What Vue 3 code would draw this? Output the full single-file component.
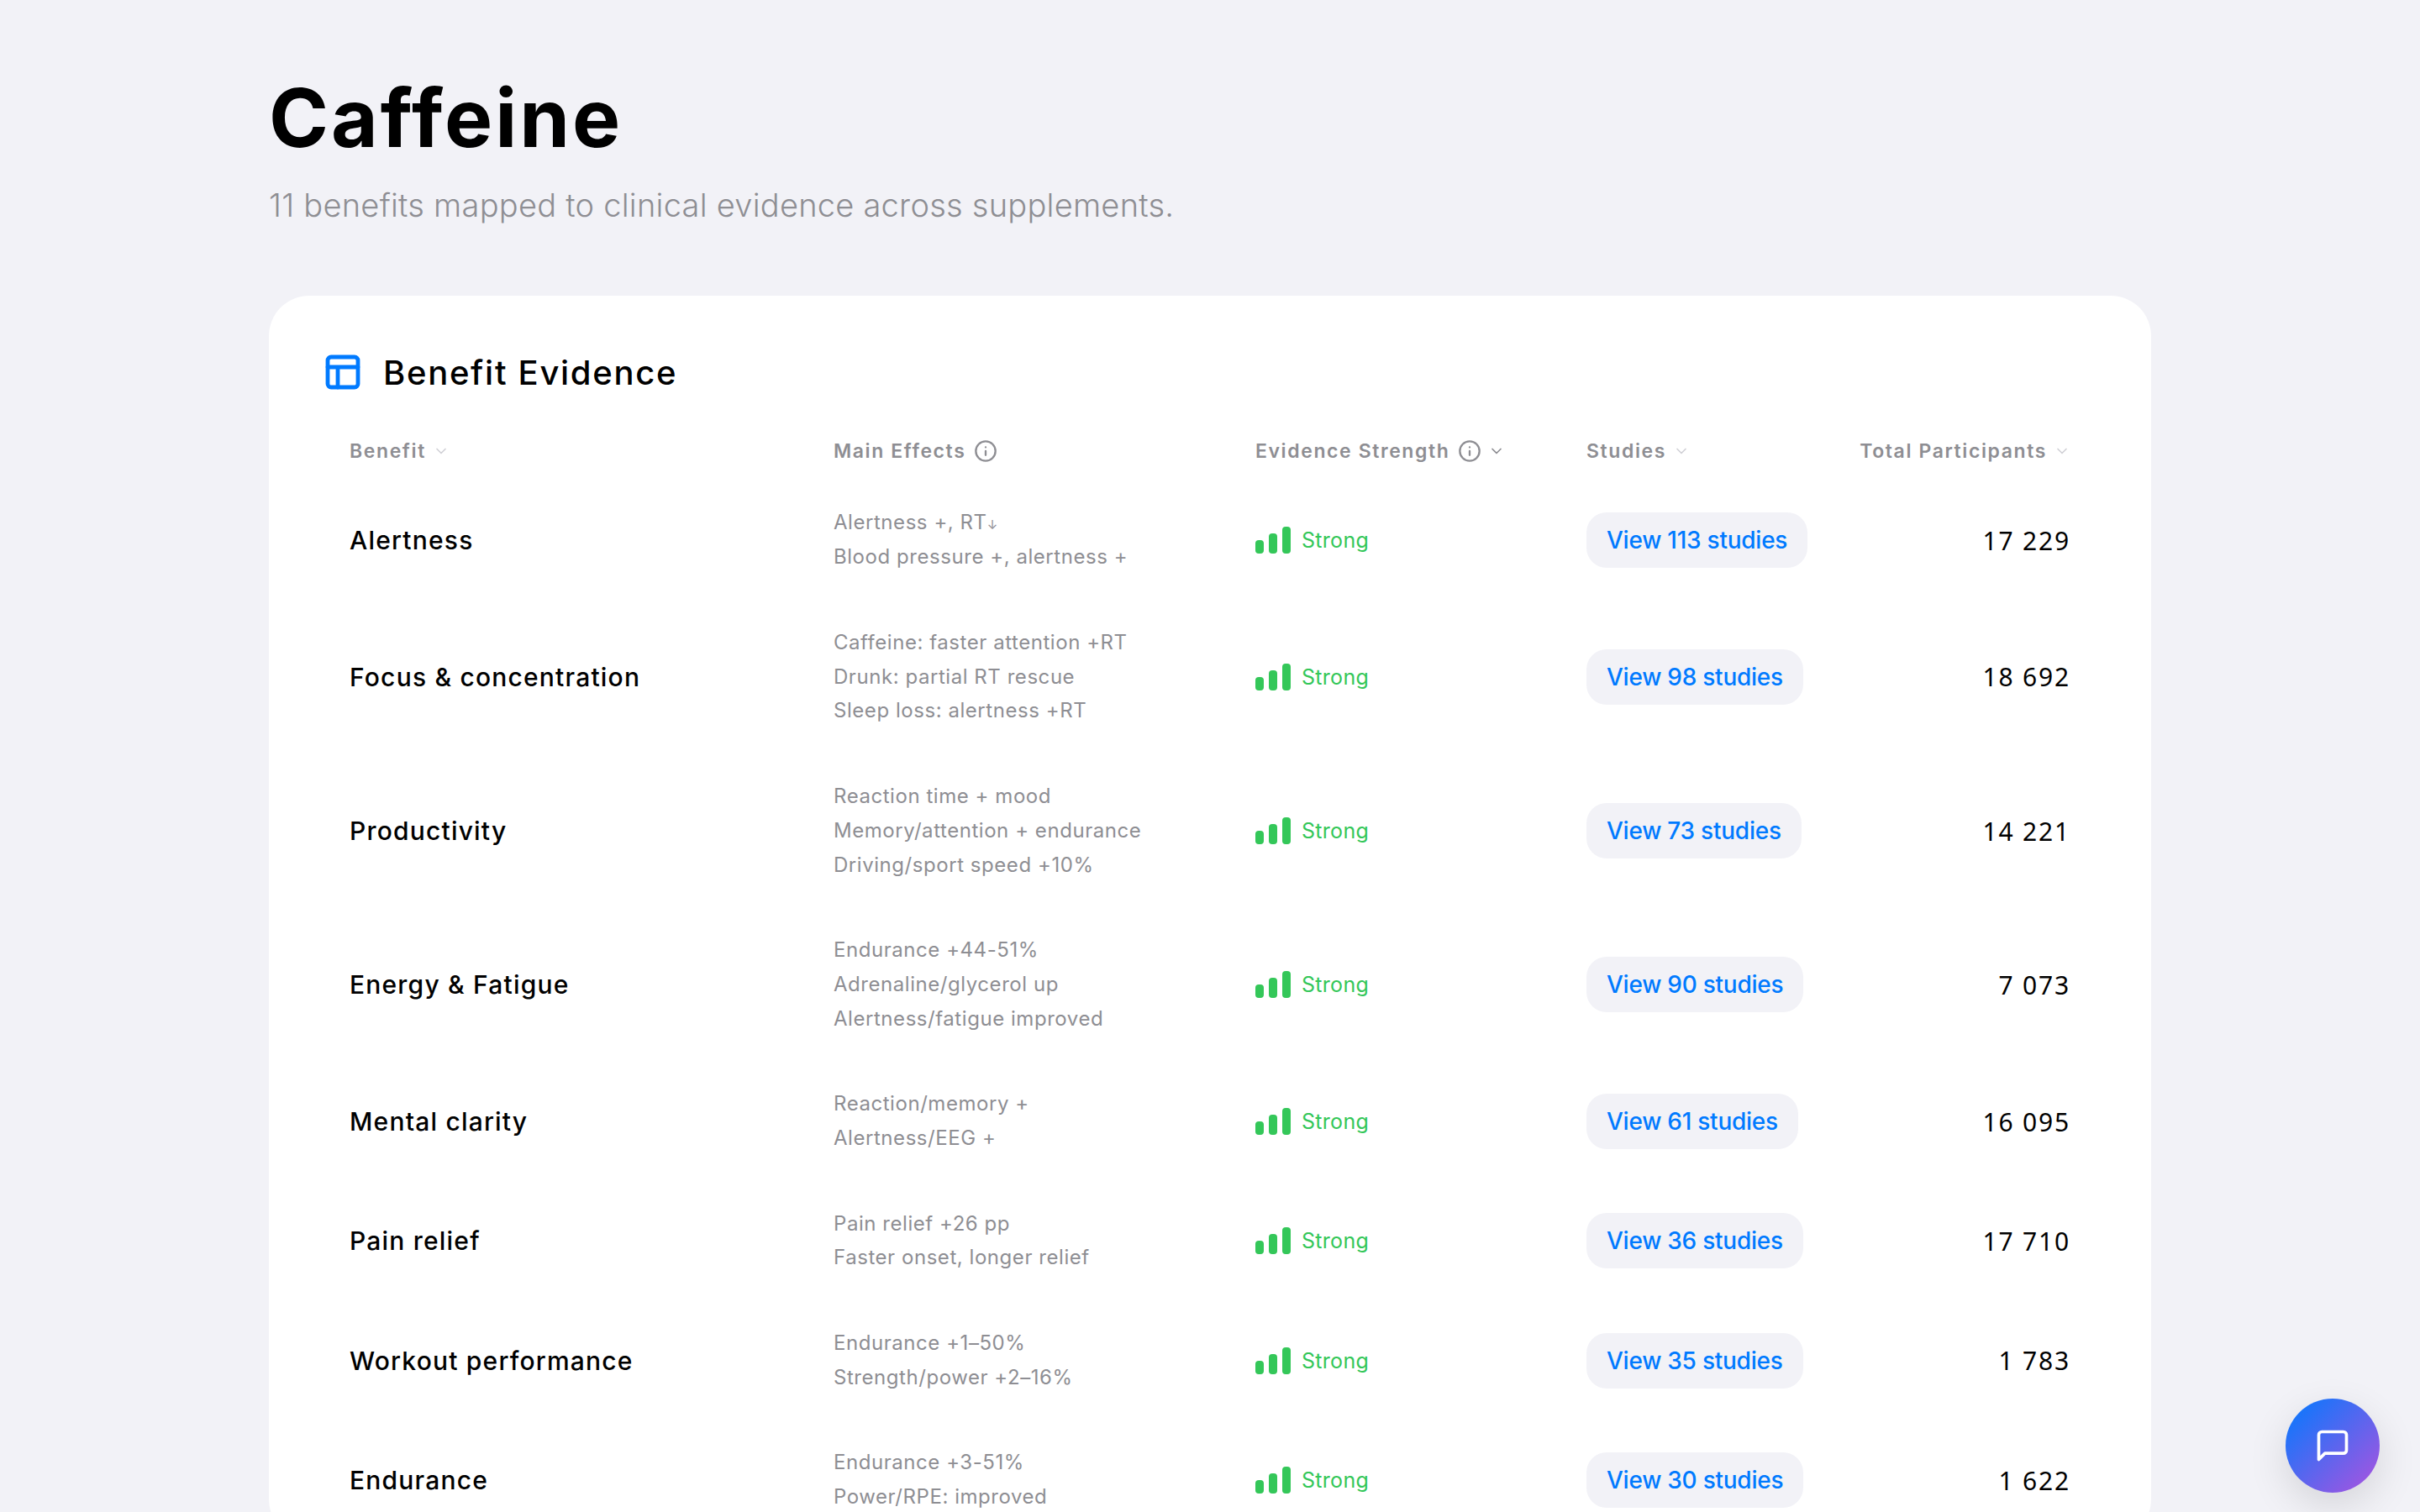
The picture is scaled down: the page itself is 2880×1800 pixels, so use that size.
<script setup>
const rows = [
  { name: 'Alertness', effects: ['Alertness +, RT', 'Blood pressure +, alertness +'], arrow: true, studies: 113, total: '17 229' },
  { name: 'Focus & concentration', effects: ['Caffeine: faster attention +RT', 'Drunk: partial RT rescue', 'Sleep loss: alertness +RT'], studies: 98, total: '18 692' },
  { name: 'Productivity', effects: ['Reaction time + mood', 'Memory/attention + endurance', 'Driving/sport speed +10%'], studies: 73, total: '14 221' },
  { name: 'Energy & Fatigue', effects: ['Endurance +44-51%', 'Adrenaline/glycerol up', 'Alertness/fatigue improved'], studies: 90, total: '7 073' },
  { name: 'Mental clarity', effects: ['Reaction/memory +', 'Alertness/EEG +'], studies: 61, total: '16 095' },
  { name: 'Pain relief', effects: ['Pain relief +26 pp', 'Faster onset, longer relief'], studies: 36, total: '17 710' },
  { name: 'Workout performance', effects: ['Endurance +1–50%', 'Strength/power +2–16%'], studies: 35, total: '1 783' },
  { name: 'Endurance', effects: ['Endurance +3-51%', 'Power/RPE: improved'], studies: 30, total: '1 622' },
]
</script>

<template>
  <div class="page">
    <h1 class="title">Caffeine</h1>
    <p class="subtitle">11 benefits mapped to clinical evidence across supplements.</p>

    <section class="card">
      <div class="card-head">
        <svg class="layout-icon" viewBox="0 0 24 24" fill="none" stroke="currentColor" stroke-width="2.4" stroke-linecap="round" stroke-linejoin="round">
          <rect x="3" y="3" width="18" height="18" rx="2" />
          <path d="M3 9h18M9 21V9" />
        </svg>
        <h2>Benefit Evidence</h2>
      </div>

      <div class="grid head-row">
        <div class="th">
          Benefit
          <svg class="chev" viewBox="0 0 24 24"><path d="m6 9 6 6 6-6" /></svg>
        </div>
        <div class="th">
          Main Effects
          <svg class="info" viewBox="0 0 24 24"><circle cx="12" cy="12" r="10" /><path d="M12 16v-4M12 8h.01" /></svg>
        </div>
        <div class="th">
          Evidence Strength
          <svg class="info" viewBox="0 0 24 24"><circle cx="12" cy="12" r="10" /><path d="M12 16v-4M12 8h.01" /></svg>
          <svg class="chev dark" viewBox="0 0 24 24"><path d="m6 9 6 6 6-6" /></svg>
        </div>
        <div class="th">
          Studies
          <svg class="chev" viewBox="0 0 24 24"><path d="m6 9 6 6 6-6" /></svg>
        </div>
        <div class="th end">
          Total Participants
          <svg class="chev" viewBox="0 0 24 24"><path d="m6 9 6 6 6-6" /></svg>
        </div>
      </div>

      <div v-for="row in rows" :key="row.name" class="grid row">
        <div class="name">{{ row.name }}</div>
        <div class="effects">
          <div v-for="(line, i) in row.effects" :key="line" class="line">{{ line }}<span v-if="row.arrow && i === 0" class="arrow">↓</span></div>
        </div>
        <div class="strength">
          <span class="bars"><i class="b1" /><i class="b2" /><i class="b3" /></span>
          Strong
        </div>
        <div class="studies-cell"><a class="studies">View {{ row.studies }} studies</a></div>
        <div class="total">{{ row.total }}</div>
      </div>
    </section>

    <button class="chat">
      <svg viewBox="0 0 24 24" fill="none" stroke="#fff" stroke-width="2" stroke-linecap="round" stroke-linejoin="round">
        <path d="M21 15a2 2 0 0 1-2 2H7l-4 4V5a2 2 0 0 1 2-2h14a2 2 0 0 1 2 2z" />
      </svg>
    </button>
  </div>
</template>

<style>
html,
body {
  margin: 0;
  height: 100%;
  overflow: hidden;
  background: #f2f2f7;
}
</style>

<style scoped>
.page {
  box-sizing: border-box;
  height: 1800px;
  padding: 82px 320px 0;
  background: #f2f2f7;
  font-family: Inter, "Liberation Sans", sans-serif;
  color: #000;
}
.title {
  margin: 0;
  font-size: 96px;
  line-height: 116px;
  font-weight: 700;
  letter-spacing: 3px;
}
.subtitle {
  margin: 16px 0 0;
  font-size: 38px;
  line-height: 60px;
  font-weight: 300;
  color: #8e8e93;
  letter-spacing: 0.25px;
}
.card {
  margin-top: 78px;
  padding: 64px 64px 0;
  background: #fff;
  border-radius: 48px;
}
.card-head {
  display: flex;
  align-items: center;
  gap: 24px;
  height: 54px;
  margin-bottom: 32px;
}
.card-head h2 {
  margin: 0;
  font-size: 40px;
  font-weight: 500;
  letter-spacing: 1.7px;
}
.layout-icon {
  width: 48px;
  height: 48px;
  color: #007aff;
}
.grid {
  display: grid;
  grid-template-columns: 576px 502px 394px 1fr 1fr;
  padding: 0 32px;
  align-items: center;
}
.head-row {
  height: 70px;
}
.row {
  padding-top: 30.4px;
  padding-bottom: 30.4px;
}
.th {
  display: flex;
  align-items: center;
  font-size: 23px;
  font-weight: 600;
  color: #8e8e93;
  letter-spacing: 1.6px;
  white-space: nowrap;
}
.th.end {
  justify-content: flex-end;
}
.th svg {
  fill: none;
  stroke: currentColor;
  stroke-linecap: round;
  stroke-linejoin: round;
  stroke-width: 2;
}
.info {
  width: 28px;
  height: 28px;
  margin-left: 10px;
}
.chev {
  width: 20px;
  height: 20px;
  margin-left: 8px;
  color: #d1d1d6;
}
.chev.dark {
  color: #8e8e93;
}
.name {
  font-size: 30px;
  font-weight: 500;
  letter-spacing: 1.2px;
}
.effects {
  font-size: 24px;
  color: #8e8e93;
  letter-spacing: 0.55px;
}
.line {
  height: 40.8px;
  line-height: 40.8px;
}
.arrow {
  font-size: 15px;
  line-height: 1;
  letter-spacing: 0;
}
.strength {
  display: flex;
  align-items: center;
  gap: 13px;
  font-size: 25px;
  color: #34c759;
  letter-spacing: 0.3px;
}
.bars {
  display: flex;
  align-items: flex-end;
  gap: 6px;
  height: 32px;
}
.bars i {
  width: 10px;
  border-radius: 4px;
  background: #34c759;
}
.b1 {
  height: 16px;
}
.b2 {
  height: 24px;
}
.b3 {
  height: 32px;
}
.studies-cell {
  display: flex;
}
.studies {
  padding: 0 24px;
  line-height: 66px;
  border-radius: 24px;
  background: #f2f2f7;
  color: #007aff;
  font-size: 28px;
  font-weight: 500;
  letter-spacing: -0.25px;
}
.total {
  text-align: right;
  font-family: "Noto Sans", sans-serif;
  font-size: 30px;
  letter-spacing: 1.8px;
}
.chat {
  position: fixed;
  right: 48px;
  bottom: 23px;
  display: flex;
  align-items: center;
  justify-content: center;
  width: 112px;
  height: 112px;
  padding: 0;
  border: 0;
  border-radius: 50%;
  background: linear-gradient(135deg, #007aff, #af52de);
  box-shadow: 0 16px 48px rgba(0, 0, 0, 0.12);
}
.chat svg {
  width: 44px;
  height: 44px;
}
</style>
